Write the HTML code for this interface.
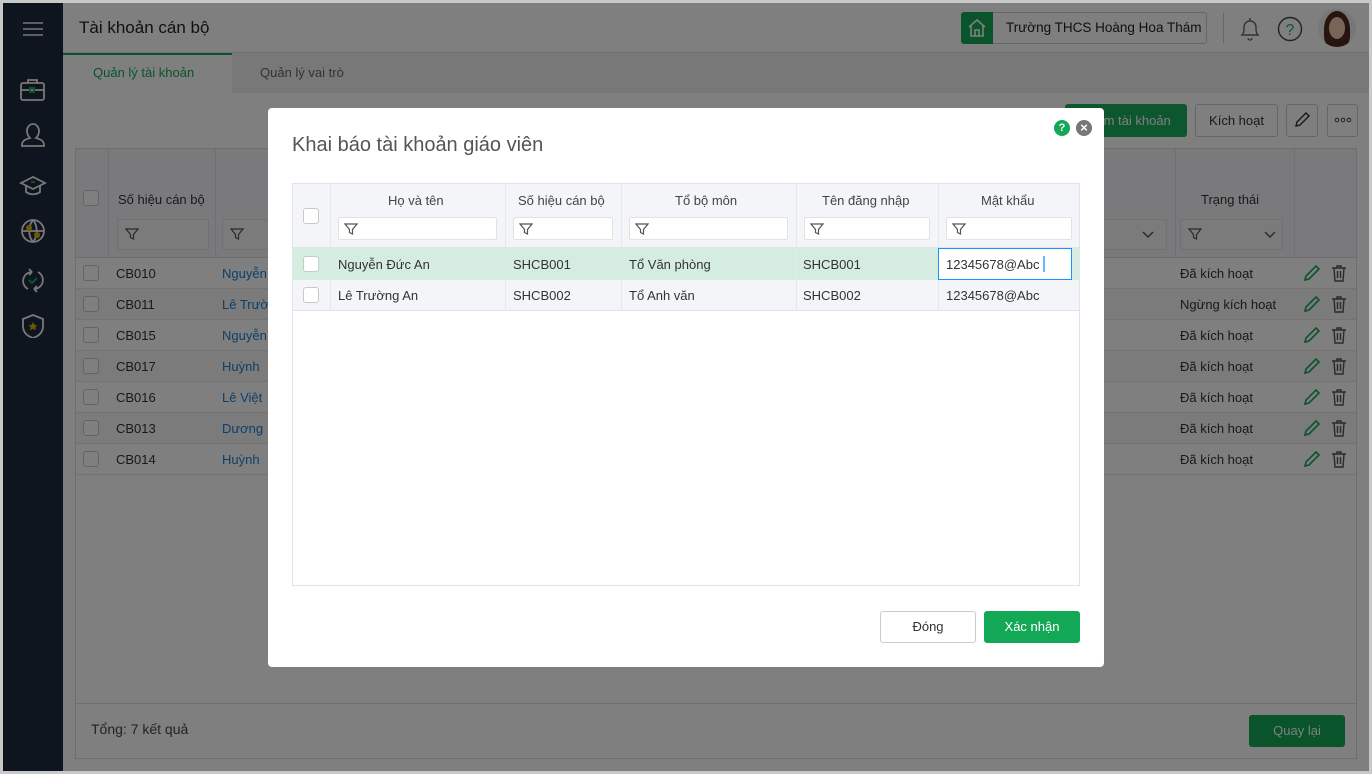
<!DOCTYPE html>
<html><head><meta charset="utf-8">
<style>
*{margin:0;padding:0;box-sizing:border-box}
body{width:1372px;height:774px;background:#c8c8c8;font-family:"Liberation Sans",sans-serif;font-size:13px;color:#333;position:relative;overflow:hidden}
.a{position:absolute}
.main{position:absolute;left:3px;top:3px;width:1366px;height:768px;background:#fff;overflow:hidden}
.side{position:absolute;left:0;top:0;width:60px;height:768px;background:#1d2a3f}
.ov{position:absolute;left:0;top:0;width:1366px;height:768px;background:rgba(0,0,0,.5)}
.cb{position:absolute;width:16px;height:16px;border:1px solid #c9c9c9;border-radius:3px;background:#fff}
.flt{position:absolute;height:23px;border:1px solid #e2e2e2;background:#fff;border-radius:2px}
.t{position:absolute;white-space:nowrap}
.btn{position:absolute;border-radius:3px;text-align:center;font-size:13px}
</style></head><body>
<div class="main">
 <div class="side">
  <svg class="a" style="left:20px;top:18px" width="20" height="16"><g stroke="#b8bcc4" stroke-width="2"><line x1="0" y1="2" x2="20" y2="2"/><line x1="0" y1="8" x2="20" y2="8"/><line x1="0" y1="14" x2="20" y2="14"/></g></svg>
  <svg class="a" style="left:16px;top:75px" width="28" height="260" fill="none" stroke="#f0f0f0" stroke-width="1.8">
   <rect x="2" y="5" width="23" height="17" rx="2"/><path d="M9 5V2h9v3M2 12h23"/><rect x="11" y="10" width="4" height="4" stroke="#1db35c"/>
   <path d="M8 53a6 7 0 0 1 12 0c0 4-2 6-3 7 3 1 8 2 8 7v1H3v-1c0-5 5-6 8-7-1-1-3-3-3-7z"/>
   <path d="M2 105l12-6 12 6-12 6z M7 108v6c4 3 10 3 14 0v-6"/><path d="M12 104h4" stroke="#1db35c"/>
   <circle cx="14" cy="153" r="11"/><path d="M3 153h22M14 142c-5 6-5 16 0 22M14 142c5 6 5 16 0 22"/><circle cx="10" cy="150" r="3" fill="#e0b000" stroke="none"/><circle cx="18" cy="157" r="3" fill="#e0b000" stroke="none"/>
   <path d="M9 211a9 9 0 0 1 4-17M13 194l-3-3M13 194l-3 3M19 194a9 9 0 0 1-4 17M15 211l3-3M15 211l3 3"/><path d="M10 202l3 3 5-5" stroke="#1db35c"/>
   <path d="M14 237l10 4v7c0 6-4 10-10 12-6-2-10-6-10-12v-7z"/><path d="M14 244l1.5 3 3 .3-2.3 2 .7 3-2.9-1.6-2.9 1.6.7-3-2.3-2 3-.3z" fill="#e0b000" stroke="none"/>
  </svg>
 </div>
 <!-- header -->
 <div class="t" style="left:76px;top:15px;font-size:17px;color:#222">Tài khoản cán bộ</div>
 <div class="a" style="left:60px;top:49px;width:1306px;height:1px;background:#e2e2e2"></div>
 <div class="a" style="left:958px;top:9px;width:246px;height:32px;border:1px solid #ccc;border-radius:3px"></div>
 <div class="a" style="left:958px;top:9px;width:32px;height:32px;background:#13a855;border-radius:3px 0 0 3px"></div>
 <svg class="a" style="left:964px;top:15px" width="20" height="20" fill="none" stroke="#fff" stroke-width="1.6"><path d="M2 9l8-7 8 7M4 8v10h12V8M8 18v-6h4v6"/></svg>
 <div class="t" style="left:1003px;top:17px;font-size:13.5px;color:#222">Trường THCS Hoàng Hoa Thám</div>
 <div class="a" style="left:1220px;top:10px;width:1px;height:30px;background:#ccc"></div>
 <svg class="a" style="left:1235px;top:12px" width="24" height="28" fill="none" stroke="#666" stroke-width="1.4"><path d="M4 20c2-2 2-4 2-8a6 6 0 0 1 12 0c0 4 0 6 2 8zM10 23a2 2 0 0 0 4 0M12 3v3"/></svg>
 <svg class="a" style="left:1274px;top:13px" width="26" height="26" fill="none" stroke="#1db35c" stroke-width="1.4"><circle cx="13" cy="13" r="11.5" stroke="#444"/><text x="13" y="19" font-size="16" text-anchor="middle" fill="#1db35c" stroke="none" font-family="Liberation Sans">?</text></svg>
 <div class="a" style="left:1315px;top:6px;width:38px;height:38px;border-radius:50%;background:#eee;overflow:hidden">
  <div class="a" style="left:6px;top:2px;width:26px;height:36px;border-radius:50% 50% 30% 30%;background:#4a2a1c"></div>
  <div class="a" style="left:11px;top:8px;width:16px;height:22px;border-radius:50%;background:#f2c8b0"></div>
 </div>
 <!-- tabs -->
 <div class="a" style="left:60px;top:50px;width:1306px;height:40px;background:#f1f1f1"></div>
 <div class="a" style="left:60px;top:50px;width:169px;height:40px;background:#fff;border-top:2px solid #13a855"></div>
 <div class="t" style="left:90px;top:62px;color:#13a855;font-size:13px">Quản lý tài khoản</div>
 <div class="t" style="left:257px;top:62px;color:#666;font-size:13px">Quản lý vai trò</div>
 <!-- toolbar -->
 <div class="btn" style="left:1062px;top:101px;width:122px;height:33px;background:#1aae5e;color:#fff;line-height:33px">Thêm tài khoản</div>
 <div class="btn" style="left:1192px;top:101px;width:83px;height:33px;border:1px solid #ccc;line-height:31px">Kích hoạt</div>
 <div class="btn" style="left:1283px;top:101px;width:32px;height:33px;border:1px solid #ccc"></div>
 <svg class="a" style="left:1290px;top:108px" width="18" height="18" fill="none" stroke="#333" stroke-width="1.4"><path d="M3 15l1-4 9-9 3 3-9 9z"/></svg>
 <div class="btn" style="left:1324px;top:101px;width:31px;height:33px;border:1px solid #ccc"></div>
 <svg class="a" style="left:1331px;top:114px" width="18" height="6" fill="none" stroke="#444" stroke-width="1"><circle cx="3" cy="3" r="1.8"/><circle cx="9" cy="3" r="1.8"/><circle cx="15" cy="3" r="1.8"/></svg>
 <!-- table -->
 <div class="a" style="left:72px;top:145px;width:1282px;height:611px;border:1px solid #ddd"></div>
 <div class="a" style="left:73px;top:146px;width:1280px;height:109px;background:#f4f5f8;border-bottom:1px solid #ddd"></div>
 <div class="cb" style="left:80px;top:187px"></div>
 <div class="t" style="left:115px;top:189px">Số hiệu cán bộ</div>
 <div class="flt" style="left:114px;top:216px;width:92px;height:31px;background:#f7f7f7"></div>
 <div class="flt" style="left:219px;top:216px;width:60px;height:31px;background:#f7f7f7"></div>
 <div class="t" style="left:1198px;top:189px">Trạng thái</div>
 <div class="flt" style="left:1177px;top:216px;width:103px;height:31px;background:#f7f7f7"></div>
 <div class="flt" style="left:1000px;top:216px;width:164px;height:31px;background:#f7f7f7"></div>
 <svg class="a" style="left:1139px;top:228px" width="12" height="8" fill="none" stroke="#555" stroke-width="1.5"><path d="M1 1l5 5 5-5"/></svg>
 <svg class="a" style="left:1261px;top:228px" width="12" height="8" fill="none" stroke="#555" stroke-width="1.5"><path d="M1 1l5 5 5-5"/></svg>
 <div class="a" style="left:105px;top:146px;width:1px;height:326px;background:#e2e2e2"></div>
 <div class="a" style="left:212px;top:146px;width:1px;height:326px;background:#e2e2e2"></div>
 <div class="a" style="left:1172px;top:146px;width:1px;height:326px;background:#e2e2e2"></div>
 <div class="a" style="left:1291px;top:146px;width:1px;height:326px;background:#e2e2e2"></div>
 <div id="rows"></div>
 <div class="a" style="left:73px;top:700px;width:1280px;height:1px;background:#ddd"></div>
 <div class="t" style="left:88px;top:718px;font-size:14px;color:#444">Tổng: 7 kết quả</div>
 <div class="btn" style="left:1246px;top:712px;width:96px;height:32px;background:#13a855;color:#fff;line-height:32px">Quay lại</div>
 <div class="ov"></div>
 <!-- modal -->
 <div class="a" style="left:265px;top:105px;width:836px;height:559px;background:#fff;border-radius:4px"></div>
 <div class="t" style="left:289px;top:131px;font-size:20px;color:#555">Khai báo tài khoản giáo viên</div>
 <div class="a" style="left:1051px;top:117px;width:16px;height:16px;border-radius:50%;background:#13a855;color:#fff;font-size:11px;font-weight:bold;text-align:center;line-height:16px">?</div>
 <div class="a" style="left:1073px;top:117px;width:16px;height:16px;border-radius:50%;background:#777;color:#fff;font-size:13px;font-weight:bold;text-align:center;line-height:16px">×</div>
 <div class="a" style="left:289px;top:180px;width:788px;height:403px;border:1px solid #e2e2ee"></div>
 <div class="a" style="left:290px;top:181px;width:786px;height:64px;background:#f4f5f9;border-bottom:1px solid #e2e2ee"></div>
 <div class="a" style="left:290px;top:245px;width:786px;height:32px;background:#d4ede0"></div>
 <div class="a" style="left:290px;top:277px;width:786px;height:31px;background:#f4f5f9;border-bottom:1px solid #e2e2ee"></div>
 <div class="a" style="left:327px;top:181px;width:1px;height:127px;background:#e6e6ee"></div>
 <div class="a" style="left:502px;top:181px;width:1px;height:127px;background:#e6e6ee"></div>
 <div class="a" style="left:618px;top:181px;width:1px;height:127px;background:#e6e6ee"></div>
 <div class="a" style="left:793px;top:181px;width:1px;height:127px;background:#e6e6ee"></div>
 <div class="a" style="left:935px;top:181px;width:1px;height:127px;background:#e6e6ee"></div>
 <div class="cb" style="left:300px;top:205px"></div>
 <div class="cb" style="left:300px;top:253px"></div>
 <div class="cb" style="left:300px;top:284px"></div>
 <div class="t" style="left:385px;top:190px;color:#444">Họ và tên</div>
 <div class="t" style="left:515px;top:190px;color:#444">Số hiệu cán bộ</div>
 <div class="t" style="left:672px;top:190px;color:#444">Tổ bộ môn</div>
 <div class="t" style="left:819px;top:190px;color:#444">Tên đăng nhập</div>
 <div class="t" style="left:978px;top:190px;color:#444">Mật khẩu</div>
 <div id="mf"></div>
 <div class="t" style="left:335px;top:254px">Nguyễn Đức An</div>
 <div class="t" style="left:510px;top:254px">SHCB001</div>
 <div class="t" style="left:626px;top:254px">Tổ Văn phòng</div>
 <div class="t" style="left:800px;top:254px">SHCB001</div>
 <div class="a" style="left:935px;top:245px;width:134px;height:32px;border:1px solid #1e90ff;background:#fff"></div>
 <div class="t" style="left:943px;top:254px">12345678@Abc</div>
 <div class="a" style="left:1040px;top:253px;width:2px;height:16px;background:#6cb6ff"></div>
 <div class="t" style="left:335px;top:285px">Lê Trường An</div>
 <div class="t" style="left:510px;top:285px">SHCB002</div>
 <div class="t" style="left:626px;top:285px">Tổ Anh văn</div>
 <div class="t" style="left:800px;top:285px">SHCB002</div>
 <div class="t" style="left:943px;top:285px">12345678@Abc</div>
 <div class="btn" style="left:877px;top:608px;width:96px;height:32px;border:1px solid #ccc;line-height:30px;color:#333">Đóng</div>
 <div class="btn" style="left:981px;top:608px;width:96px;height:32px;background:#13a855;color:#fff;line-height:32px">Xác nhận</div>
</div>
<script>
var F='<svg class="a" style="left:LLpx;top:TTpx" width="14" height="14" fill="none" stroke="#555" stroke-width="1.2"><path d="M1 2h12L8.5 7.5V12L5.5 10.5V7.5z"/></svg>';
function f(l,t){return F.replace('LL',l).replace('TT',t);}
var h='';
var ids=['CB010','CB011','CB015','CB017','CB016','CB013','CB014'];
var nm=['Nguyễn','Lê Trườ','Nguyễn','Huỳnh','Lê Việt','Dương','Huỳnh'];
for(var i=0;i<7;i++){var y=255+i*31;
h+='<div class="a" style="left:73px;top:'+y+'px;width:1280px;height:31px;background:'+(i%2?'#f6f6f6':'#fff')+';border-bottom:1px solid #e6e6e6"></div>';
h+='<div class="cb" style="left:80px;top:'+(y+7)+'px"></div>';
h+='<div class="t" style="left:113px;top:'+(y+8)+'px">'+ids[i]+'</div>';
h+='<div class="t" style="left:219px;top:'+(y+8)+'px;color:#1a7fd0">'+nm[i]+'</div>';
h+='<div class="t" style="left:1177px;top:'+(y+8)+'px">'+(i==1?'Ngừng kích hoạt':'Đã kích hoạt')+'</div>';
h+='<svg class="a" style="left:1300px;top:'+(y+6)+'px" width="18" height="18" fill="none" stroke="#13a855" stroke-width="1.6"><path d="M2 16l1-4 10-10 3 3-10 10z"/></svg>';
h+='<svg class="a" style="left:1328px;top:'+(y+6)+'px" width="16" height="18" fill="none" stroke="#555" stroke-width="1.4"><path d="M1 4h14M6 4V2h4v2M3 4l1 13h8l1-13M6.5 7v7M9.5 7v7"/></svg>';}
h+=f(122,224)+f(227,224)+f(1185,224);
document.getElementById('rows').innerHTML=h;
var m='';
[[335,214,159],[510,214,100],[626,214,159],[801,214,126],[943,214,126]].forEach(function(a){
m+='<div class="flt" style="left:'+a[0]+'px;top:'+a[1]+'px;width:'+a[2]+'px"></div>'+f(a[0]+6,a[1]+5);});
document.getElementById('mf').innerHTML=m;
</script>
</body></html>
